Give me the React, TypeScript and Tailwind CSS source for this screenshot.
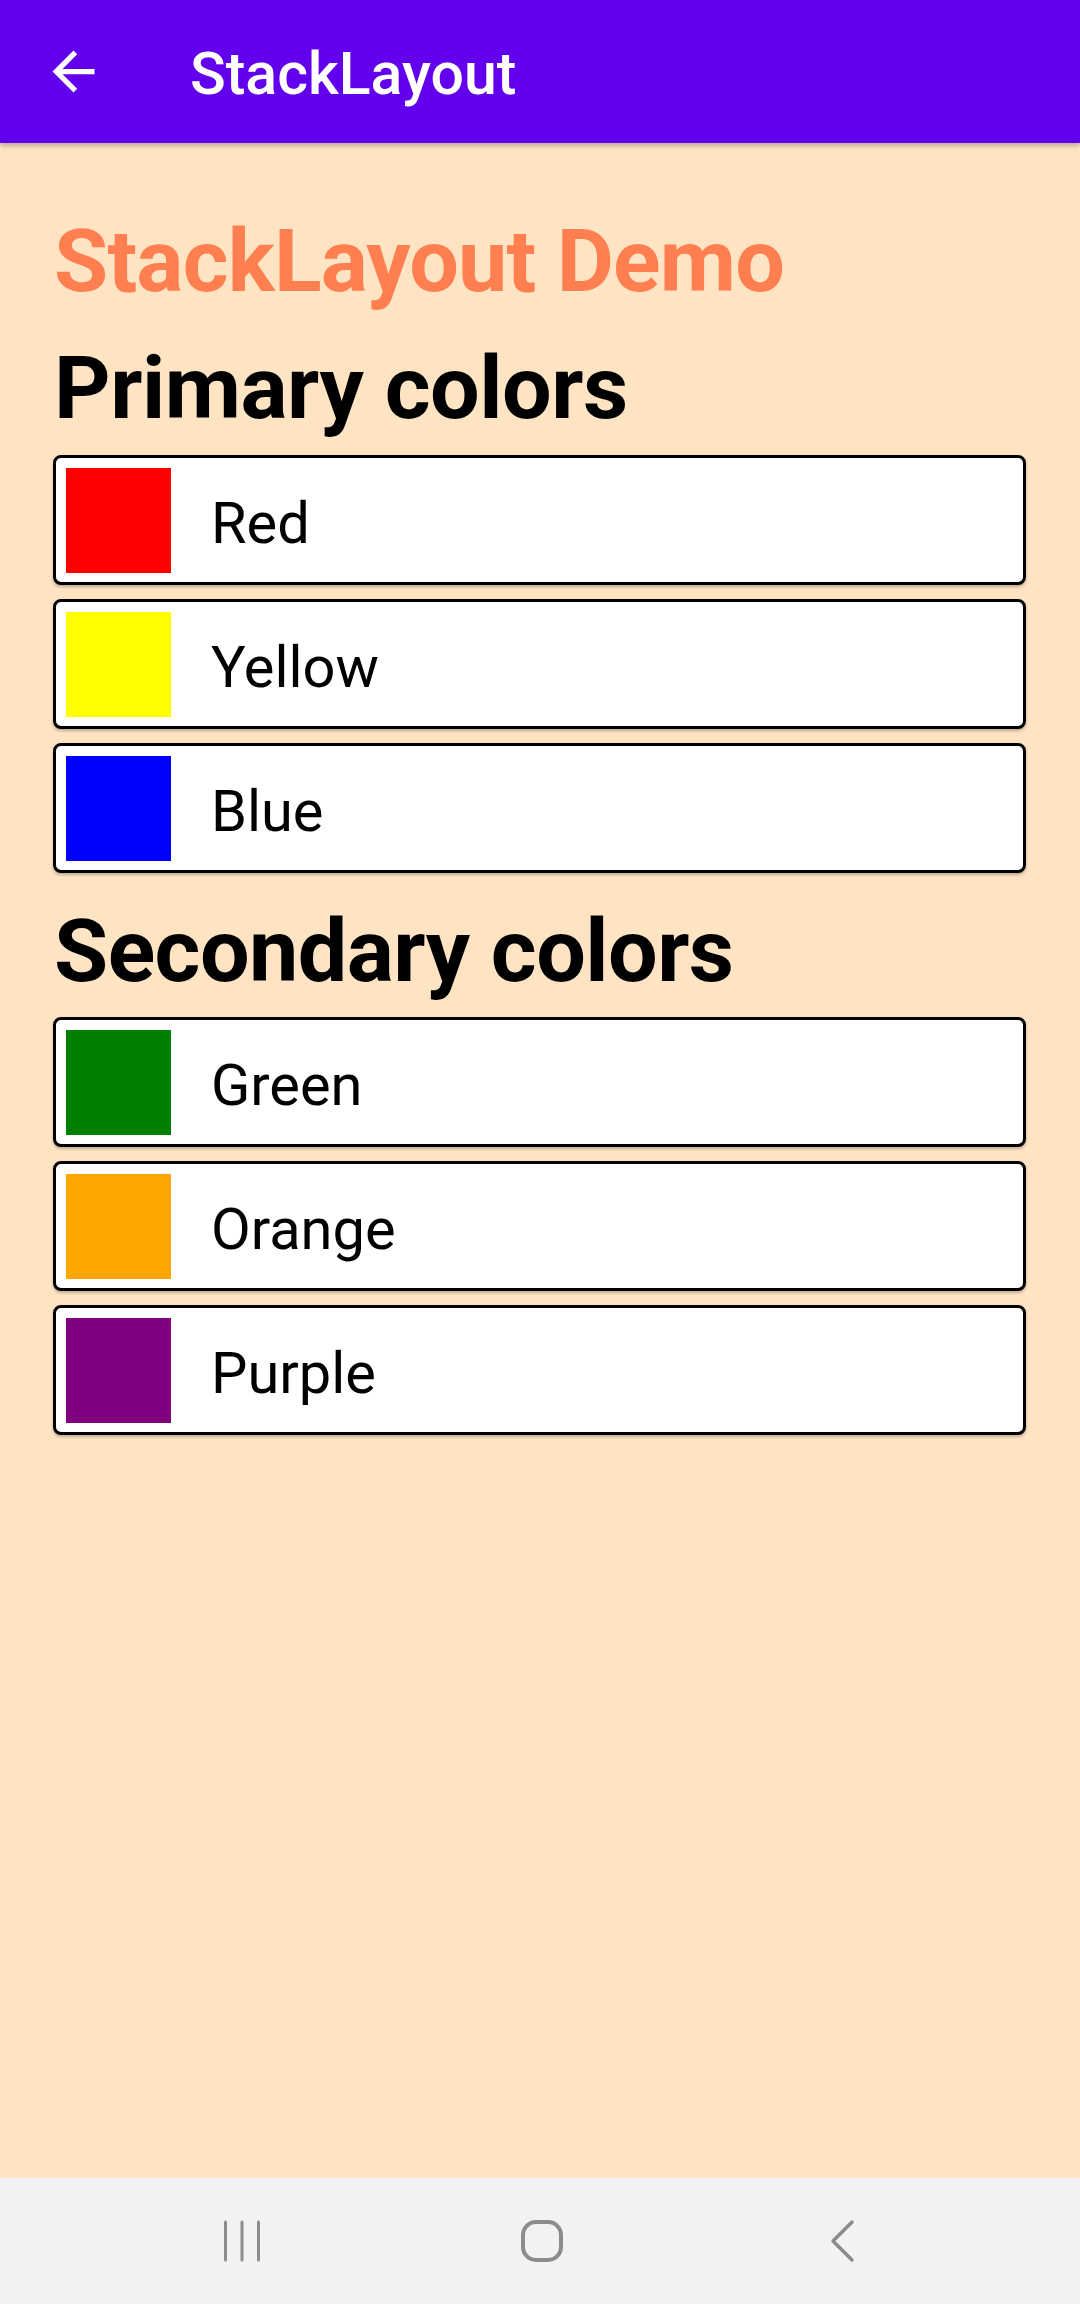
import React from "react";

const primary = [
  { name: "Red", color: "bg-[#ff0000]" },
  { name: "Yellow", color: "bg-[#ffff00]" },
  { name: "Blue", color: "bg-[#0000ff]" },
];
const secondary = [
  { name: "Green", color: "bg-[#008000]" },
  { name: "Orange", color: "bg-[#ffa500]" },
  { name: "Purple", color: "bg-[#800080]" },
];

function Row({ name, color }: { name: string; color: string }) {
  return (
    <div className="flex items-center h-[130px] border-[3px] border-black rounded-[8px] bg-white pl-[10px] shadow-[0_2px_3px_rgba(0,0,0,0.25)]">
      <div className={`w-[105px] h-[105px] shrink-0 ${color}`} />
      <span className="ml-[40px] pt-[8px] text-[57.75px] leading-[57.75px] text-black font-normal">
        {name}
      </span>
    </div>
  );
}

export default function App() {
  return (
    <div
      className="w-[1080px] h-[2304px] flex flex-col bg-[#ffe4c4] overflow-hidden"
      style={{ fontFamily: "Roboto, 'Noto Sans', sans-serif" }}
    >
      <header className="relative z-10 h-[143px] shrink-0 bg-[#6200ee] flex items-center shadow-[0_3px_5px_rgba(0,0,0,0.25)]">
        <svg
          className="ml-[42px] w-[63px] h-[63px] shrink-0"
          viewBox="0 0 24 24"
          fill="#ffffff"
        >
          <path d="M20 11H7.83l5.59-5.59L12 4l-8 8 8 8 1.41-1.41L7.83 13H20v-2z" />
        </svg>
        <span className="ml-[85px] pt-[4px] text-white font-medium text-[59px] leading-[59px]">
          StackLayout
        </span>
      </header>

      <main className="flex-1 flex flex-col pl-[53px] pr-[54px] pt-[74px]">
        <h1 className="ml-[1px] text-[#ff7f50] font-bold text-[88px] leading-[88px] tracking-[-0.8px]">
          StackLayout Demo
        </h1>
        <h2 className="mt-[39px] ml-[1px] text-black font-bold text-[88px] leading-[88px] tracking-[-0.5px]">
          Primary colors
        </h2>
        <div className="mt-[23px] flex flex-col gap-[14px]">
          {primary.map((c) => (
            <Row key={c.name} {...c} />
          ))}
        </div>
        <h2 className="mt-[34px] ml-[1px] text-black font-bold text-[88px] leading-[88px] tracking-[-0.55px]">
          Secondary colors
        </h2>
        <div className="mt-[22px] flex flex-col gap-[14px]">
          {secondary.map((c) => (
            <Row key={c.name} {...c} />
          ))}
        </div>
      </main>

      <nav className="h-[126px] shrink-0 bg-[#f2f2f2] flex items-center pl-[212px] gap-[240px]">
        <div className="w-[60px] h-[60px] flex items-center justify-center">
          <svg width="40" height="42" viewBox="0 0 40 42">
            <g stroke="#8c8c8c" strokeWidth="3" strokeLinecap="round">
              <line x1="3.5" y1="2" x2="3.5" y2="40" />
              <line x1="20" y1="2" x2="20" y2="40" />
              <line x1="36.5" y1="2" x2="36.5" y2="40" />
            </g>
          </svg>
        </div>
        <div className="w-[60px] h-[60px] flex items-center justify-center">
          <svg width="44" height="44" viewBox="0 0 44 44">
            <rect
              x="3"
              y="3"
              width="38"
              height="38"
              rx="13"
              fill="none"
              stroke="#8c8c8c"
              strokeWidth="4"
            />
          </svg>
        </div>
        <div className="w-[60px] h-[60px] flex items-center justify-center">
          <svg width="28" height="44" viewBox="0 0 28 44">
            <polyline
              points="24,3 5,22 24,41"
              fill="none"
              stroke="#8c8c8c"
              strokeWidth="3.5"
              strokeLinecap="round"
              strokeLinejoin="round"
            />
          </svg>
        </div>
      </nav>
    </div>
  );
}
